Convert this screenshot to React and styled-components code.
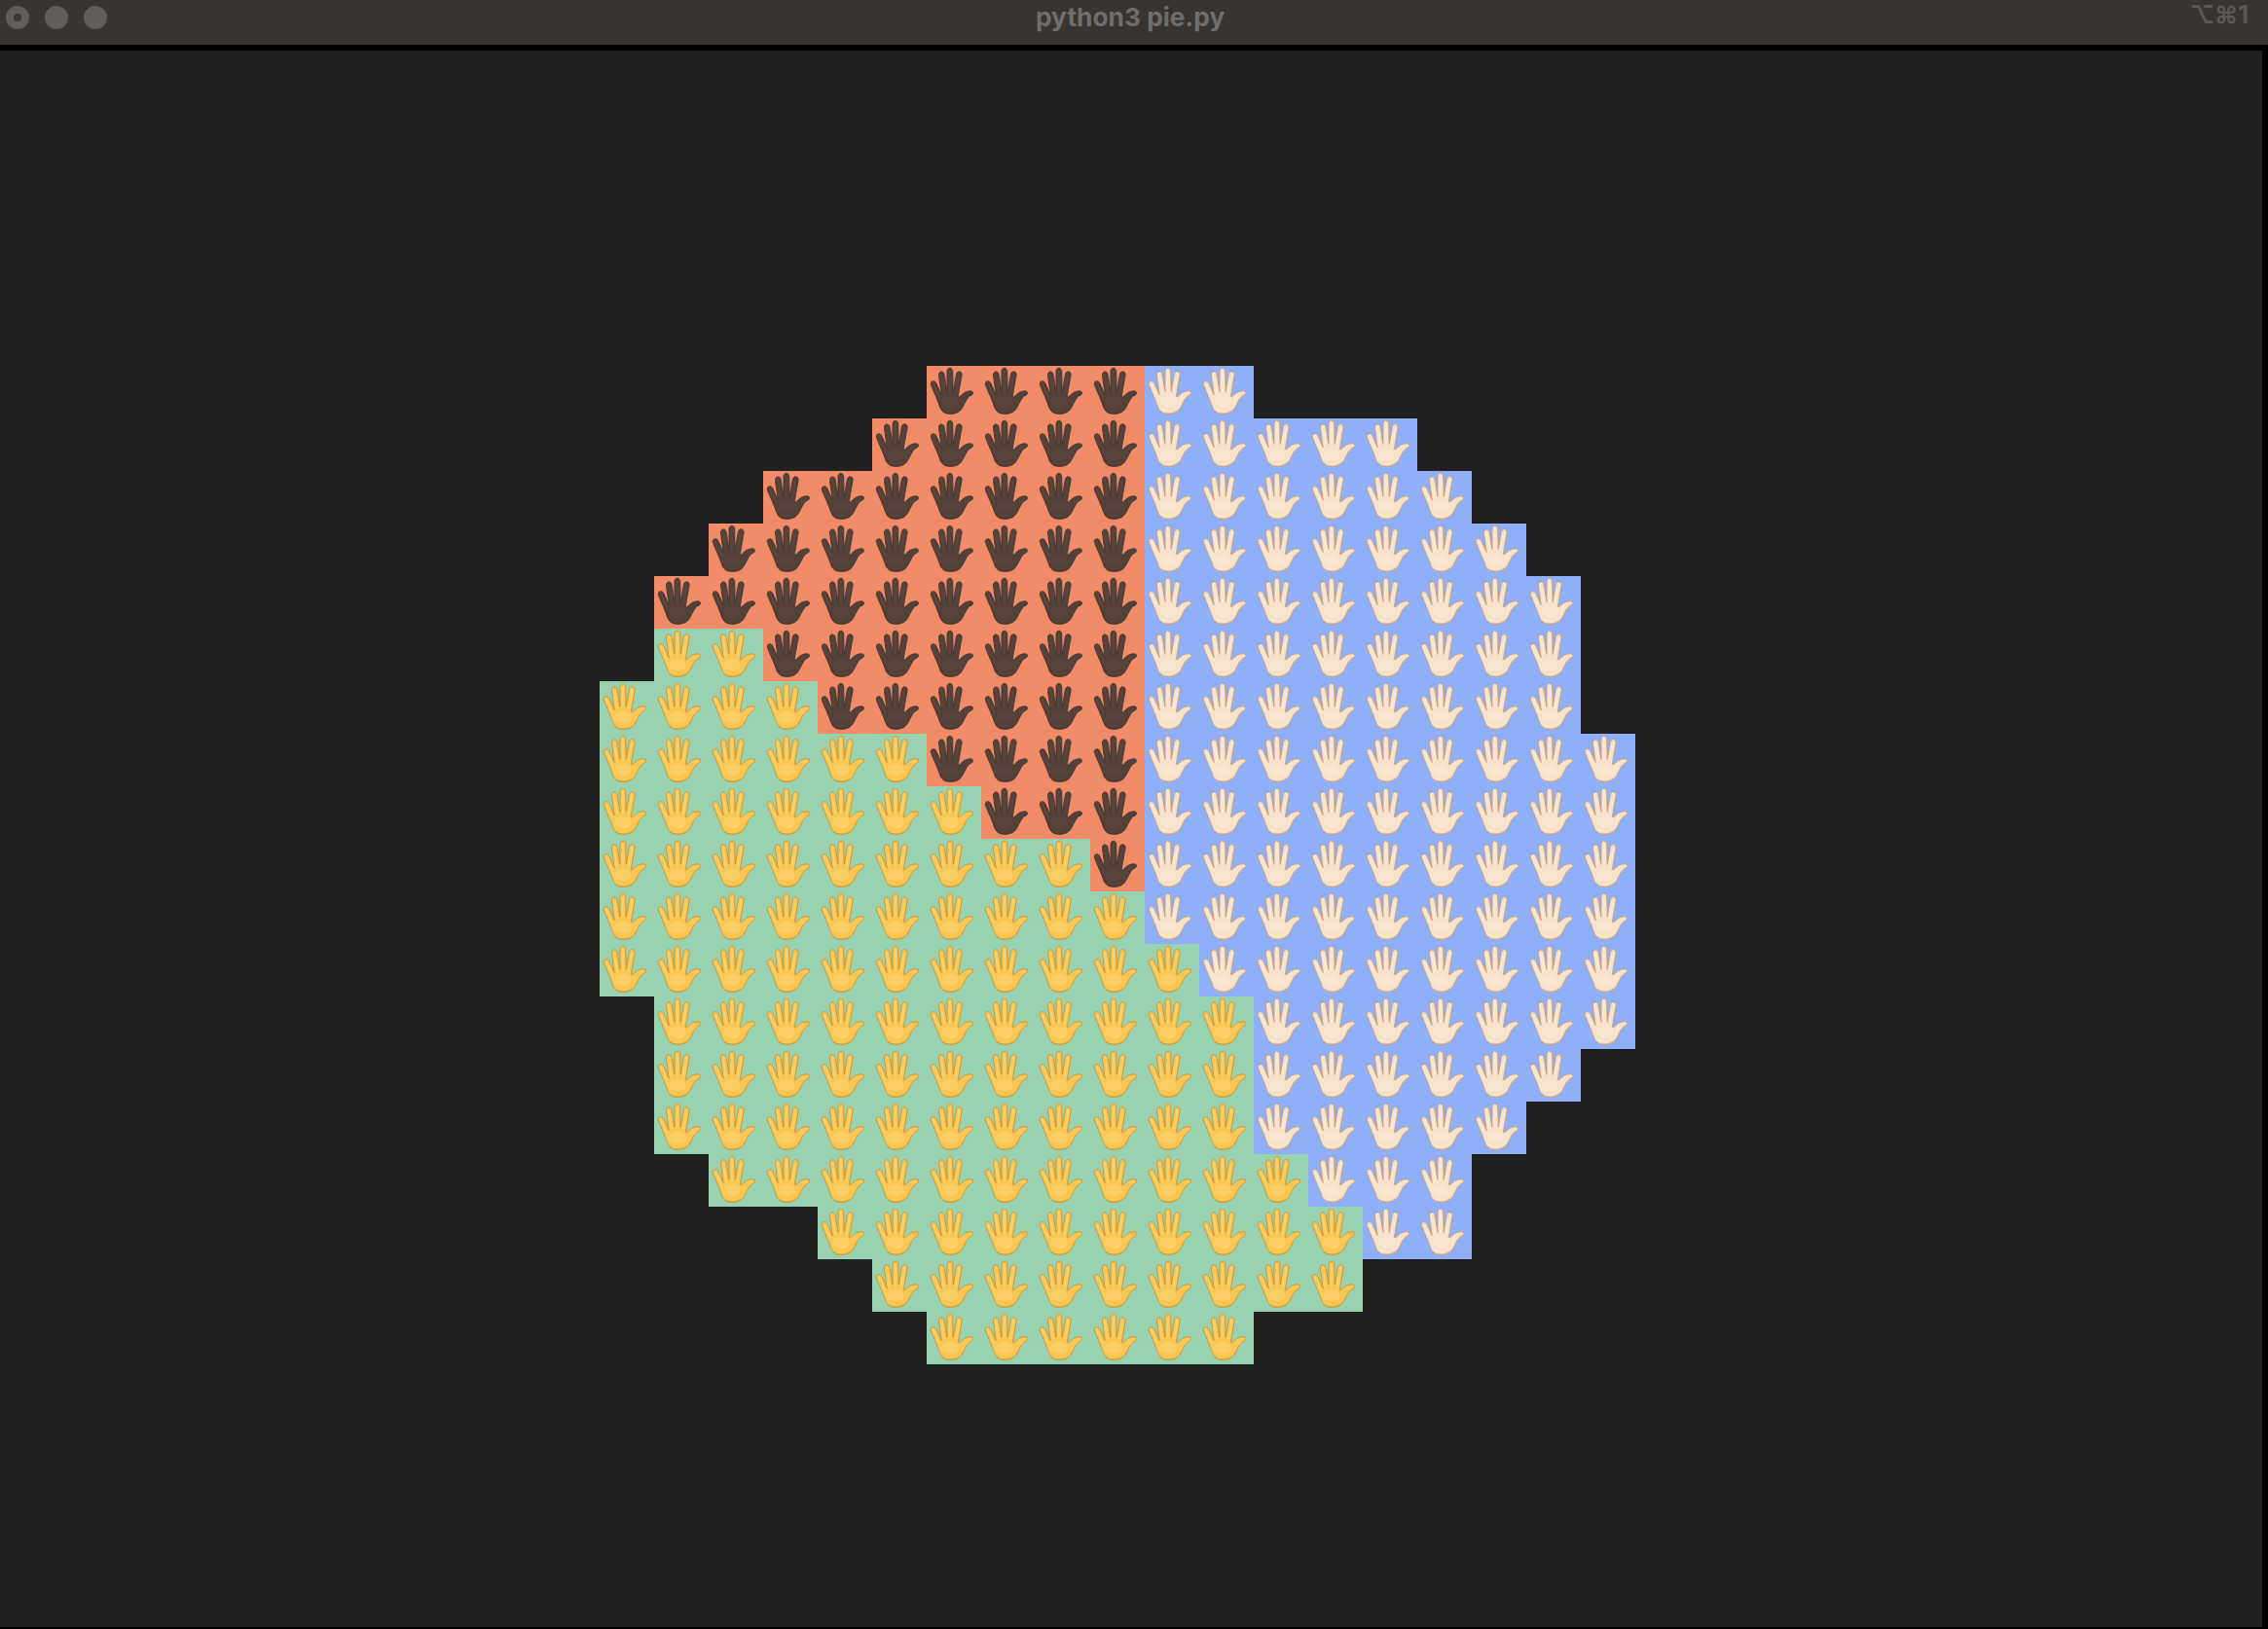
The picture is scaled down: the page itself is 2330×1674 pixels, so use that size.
import React from 'react'
import styled, { createGlobalStyle } from 'styled-components'

const GlobalStyle = createGlobalStyle`
  html, body { margin: 0; padding: 0; background: #000; }
  #root { width: 2330px; height: 1674px; overflow: hidden; }
`

const Window = styled.div`
  width: 2330px;
  height: 1674px;
  display: flex;
  flex-direction: column;
  background: #000;
`

const TitleBar = styled.header`
  height: 46px;
  flex: none;
  display: flex;
  align-items: center;
  position: relative;
  background: #383432;
  border-bottom: 6px solid #000;
`

const Lights = styled.div`
  display: flex;
  gap: 16px;
  padding: 0 0 10px 6px;
`

const Light = styled.span`
  width: 24px;
  height: 24px;
  border-radius: 50%;
  background: #605d5b;
  display: flex;
  align-items: center;
  justify-content: center;
  &::after {
    content: '';
    width: 8px;
    height: 8px;
    border-radius: 50%;
    background: ${(p) => (p.$dot ? '#3c3836' : 'transparent')};
  }
`

const Title = styled.div`
  position: absolute;
  left: 1064px;
  top: 0;
  font: 700 26.3px/35px Inter, 'Liberation Sans', sans-serif;
  color: #706d6b;
`

const Shortcut = styled.div`
  position: absolute;
  right: 20px;
  top: 0;
  font: 700 25px/30px Inter, 'DejaVu Sans', sans-serif;
  color: #5c5856;
`

const Terminal = styled.main`
  flex: 1;
  margin: 0 6px 2px 0;
  padding: 324px 0 0 616px;
  background: #212121;
`

const Pie = styled.div`
  display: grid;
  grid-template-columns: repeat(19, 56px);
  grid-auto-rows: 54px;
`

const tones = {
  O: { bg: '#f18b68', fill: '#54423a', edge: '#42322b', light: '#5c4840' },
  B: { bg: '#8fafF9', fill: '#f8e2ca', edge: '#c9976f', light: '#fbecd9' },
  G: { bg: '#98d2b0', fill: '#fbc754', edge: '#c98a2c', light: '#fdd777' },
}

const Cell = styled.div`
  background: ${(p) => (p.$tone ? tones[p.$tone].bg : 'transparent')};
`

const HandSvg = styled.svg`
  display: block;
  width: 56px;
  height: 54px;
`

const outline =
  'M4.4 19.4C3.8 17.2 5 15.7 6.9 15.7C8.4 15.7 9.4 16.5 9.9 18L15.2 29.6L12.5 10.4C12.2 7.8 13.2 6 15 5.9C16.8 5.8 17.9 7 18.2 9.2L20.9 26.4L21 5.8C21 3.6 22.2 2.3 23.8 2.3C25.5 2.3 26.6 3.6 26.7 5.8L27.2 26.4L30.4 8.4C30.8 6.6 32 5.7 33.5 5.8C35.4 6 36.4 7.4 36.1 9.4L32.4 30.8C32.3 31.8 33.4 32.2 34.2 31.4C36 29.6 38.4 27.4 40.6 26.6C42.4 26 44 25.6 45.6 25.8C47.6 26 48.4 28.2 47 29.4C44.4 30.8 42.8 32 41.4 34.2C39.6 37 38.4 40 36.6 43.2C34.6 47 30 49.4 24.4 49.4C18.6 49.4 15 46.8 13.6 42.2C11.6 35.6 7.4 27.4 4.4 19.4Z'

// the same shape for every skin tone, only the palette changes
const Hand = ({ tone }) => {
  const { fill, edge, light } = tones[tone]
  return (
    <HandSvg viewBox="0 0 56 54">
      <path d={outline} fill={fill} stroke={edge} strokeWidth="0.8" strokeLinejoin="round" />
      <g fill="none" stroke={light} strokeWidth="1.6" strokeLinecap="round" opacity="0.7">
        <path d="M7.2 19L13 32" />
        <path d="M15.2 9.5L17.6 28" />
        <path d="M23.8 6V27" />
        <path d="M33.2 9.5L30 28" />
      </g>
      <ellipse cx="24" cy="37" rx="8.5" ry="6" fill={light} opacity="0.5" />
      <path d="M15.6 45.4C18 48 21 48.8 24.4 48.8C28 48.8 31.4 47.8 34 45.2" fill="none" stroke={edge} strokeWidth="1.4" opacity="0.3" />
    </HandSvg>
  )
}

const rows = [
  '......OOOOBB.......',
  '.....OOOOOBBBBB....',
  '...OOOOOOOBBBBBB...',
  '..OOOOOOOOBBBBBBB..',
  '.OOOOOOOOOBBBBBBBB.',
  '.GGOOOOOOOBBBBBBBB.',
  'GGGGOOOOOOBBBBBBBB.',
  'GGGGGGOOOOBBBBBBBBB',
  'GGGGGGGOOOBBBBBBBBB',
  'GGGGGGGGGOBBBBBBBBB',
  'GGGGGGGGGGBBBBBBBBB',
  'GGGGGGGGGGGBBBBBBBB',
  '.GGGGGGGGGGGBBBBBBB',
  '.GGGGGGGGGGGBBBBBB.',
  '.GGGGGGGGGGGBBBBB..',
  '..GGGGGGGGGGGBBB...',
  '....GGGGGGGGGGBB...',
  '.....GGGGGGGGG.....',
  '......GGGGGG.......',
]

const App = () => (
  <Window>
    <GlobalStyle />
    <TitleBar>
      <Lights>
        <Light $dot />
        <Light />
        <Light />
      </Lights>
      <Title>python3 pie.py</Title>
      <Shortcut>⌥⌘1</Shortcut>
    </TitleBar>
    <Terminal>
      <Pie>
        {rows.flatMap((row, r) =>
          [...row].map((c, i) =>
            c === '.' ? <Cell key={`${r}-${i}`} /> : (
              <Cell key={`${r}-${i}`} $tone={c}>
                <Hand tone={c} />
              </Cell>
            )
          )
        )}
      </Pie>
    </Terminal>
  </Window>
)

export default App
